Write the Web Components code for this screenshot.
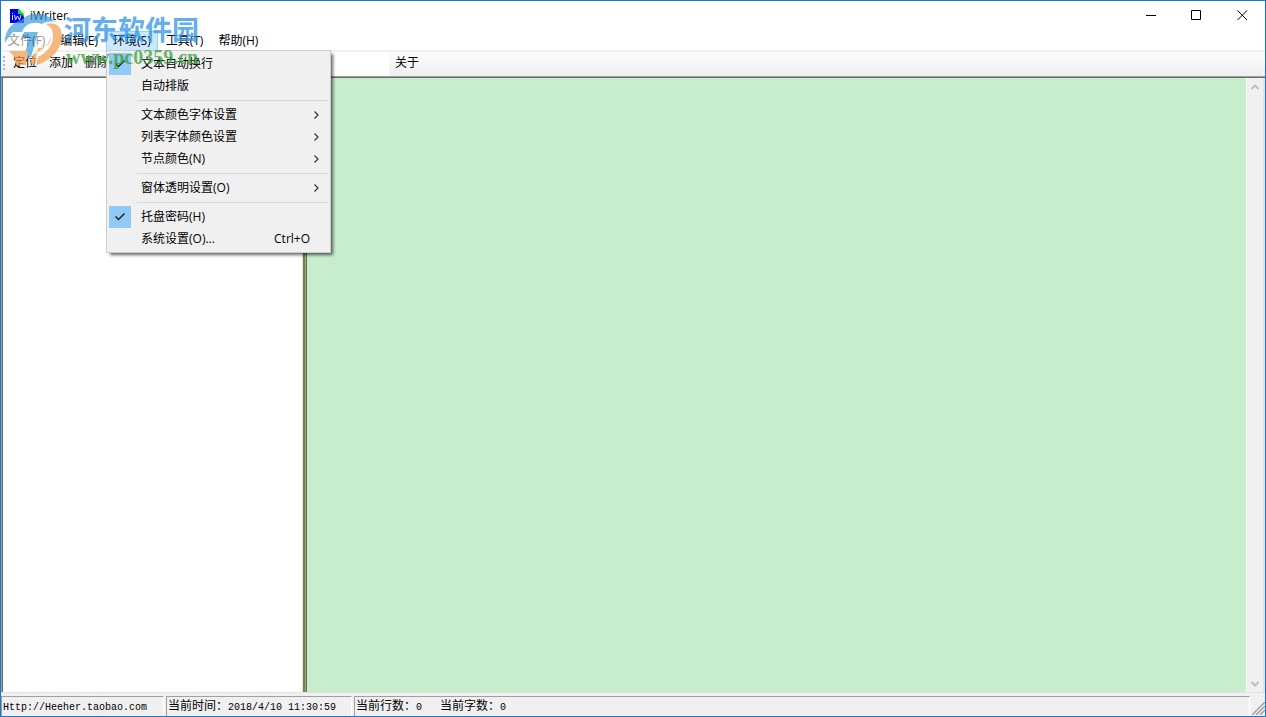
<!DOCTYPE html>
<html lang="zh-CN">
<head>
<meta charset="utf-8">
<title>iWriter</title>
<style>
html,body{height:100%;margin:0}
body{font:12px/22px "Open Sans","Noto Sans CJK SC",sans-serif;color:#000;background:#fff;overflow:hidden}
</style>
</head>
<body>
<iw-window></iw-window>
<script>
const define=(name,html)=>customElements.define(name,class extends HTMLElement{
  constructor(){super();this.attachShadow({mode:'open'}).innerHTML=html;}
});

define('iw-titlebar',`<style>
:host{display:flex;height:30px;align-items:flex-start;padding-left:8px;box-sizing:border-box}
.logo{width:16px;height:16px;margin:7px 5px 0 0}
h1{font:inherit;line-height:30px;margin:0;flex:1}
button{width:46px;height:29px;border:0;padding:0;background:none;display:grid;place-items:center}
button:first-of-type{width:45px}
</style>
<svg class="logo" viewBox="0 0 16 16"><path d="M1 1h8v5h6v9H1z" fill="#0000f0"/><path d="M9 0l6 6v3l-3-3H9z" fill="#10e020"/><path d="M3.500 5v1M3.500 7v5M5.500 7l1 5 2-4 2 4 1.500-5" stroke="#dce4ff" fill="none"/></svg>
<h1>iWriter</h1>
<button aria-label="最小化"><svg width="11" height="11"><path d="M1 5.500h10" stroke="#000"/></svg></button>
<button aria-label="最大化"><svg width="11" height="11"><path d="M.5.5h9v9h-9z" fill="none" stroke="#000"/></svg></button>
<button aria-label="关闭"><svg width="11" height="11"><path d="M.5.5l9.500 9.500M10 .5L.5 10" fill="none" stroke="#000"/></svg></button>`);

define('iw-menu-button',`<style>
:host{display:block}
button{font:inherit;height:20px;line-height:18px;border:1px solid transparent;background:none;padding:0 6px;color:inherit;display:block;white-space:nowrap}
:host([open]) button{background:#cce8ff;border-color:#99d1ff}
</style><button><slot></slot></button>`);

define('iw-menu-item',`<style>
:host{display:block}
button{font:inherit;width:100%;height:22px;border:0;padding:0 17px 0 0;background:none;color:inherit;display:flex;align-items:center;text-align:left}
i{width:22px;height:22px;margin:0 10px 0 2px;display:grid;place-items:center}
:host([checked]) i{background:#91c9f7}
i svg,.arrow{display:none}
:host([checked]) i svg{display:block}
.label{flex:1;white-space:nowrap}
.arrow{width:5px;height:8px;margin-right:-6px}
:host([sub]) .arrow{display:block}
</style>
<button role="menuitem"><i><svg width="12" height="10"><path d="M1.500 4.500L4.500 7.500 10.500 1.500" fill="none" stroke="#222" stroke-width="1.500"/></svg></i><span class="label"><slot></slot></span><slot name="key"></slot><svg class="arrow" viewBox="0 0 5 8"><path d="M.5.5L4 4 .5 7.500" fill="none" stroke="#333" stroke-width="1.200"/></svg></button>`);

define('iw-menu',`<style>
:host{display:block;box-sizing:border-box;width:225px;padding:2px 0;background:#f0f0f0;border:1px solid #ccc;box-shadow:3px 3px 3px -1px rgba(0,0,0,.6)}
hr{height:1px;border:0;background:#d7d7d7;margin:3px 2px 3px 30px}
[slot=key]{margin-right:3px}
</style>
<iw-menu-item checked>文本自动换行</iw-menu-item><iw-menu-item>自动排版</iw-menu-item><hr>
<iw-menu-item sub>文本颜色字体设置</iw-menu-item><iw-menu-item sub>列表字体颜色设置</iw-menu-item><iw-menu-item sub>节点颜色(N)</iw-menu-item><hr>
<iw-menu-item sub>窗体透明设置(O)</iw-menu-item><hr>
<iw-menu-item checked>托盘密码(H)</iw-menu-item><iw-menu-item>系统设置(O)...<span slot="key">Ctrl+O</span></iw-menu-item>`);

define('iw-menubar',`<style>
:host{display:flex;gap:1px;height:19px;background:#fff}
.holder{position:relative}
iw-menu{position:absolute;left:0;top:19px;z-index:5}
</style>
<iw-menu-button>文件(F)</iw-menu-button><iw-menu-button>编辑(E)</iw-menu-button><div class="holder"><iw-menu-button open>环境(S)</iw-menu-button><iw-menu></iw-menu></div><iw-menu-button>工具(T)</iw-menu-button><iw-menu-button>帮助(H)</iw-menu-button>`);

define('iw-toolbar',`<style>
:host{display:flex;height:24px;border-top:2px solid #f0f0f0;border-bottom:1px solid #a0a0a0;background:linear-gradient(#fcfcfc,#efefef)}
.grip{width:2px;height:14px;margin:4px 2px 0;background:repeating-linear-gradient(#b8b8b8 0 2px,transparent 2px 4px)}
button{font:inherit;border:0;background:none;color:inherit;width:36px;padding:0;height:22px;white-space:nowrap}
input{border:0;padding:0;margin:0;width:274px;height:24px;background:#fff;outline:0}
</style>
<span class="grip"></span><button>定位</button><button>添加</button><button>删除</button><input aria-label="查找"><button>关于</button>`);

define('iw-editor',`<style>
:host{display:grid;grid-template-columns:302px 2px minmax(0,1fr);min-height:0;border-top:1px solid #696969;border-bottom:1px solid #e3e3e3}
.tree{background:#fff;border-left:1px solid #a0a0a0;border-right:1px solid #e3e3e3;box-shadow:inset 1px 0 #696969}
.split{background:#6b8e23}
.text{display:flex;background:#c7edcc;min-width:0;border-left:1px solid #a0a0a0;box-shadow:inset 1px 0 #696969}
textarea{flex:1;min-width:0;border:0;padding:0;resize:none;background:transparent;outline:0}
.scroll{width:19px;box-sizing:border-box;border-left:1px solid #fff;border-right:2px solid #e3e3e3;background:#f0f0f0;display:flex;flex-direction:column;justify-content:space-between;align-items:center;padding:6px 0 5px}
svg{width:8px;height:6px;display:block}
</style>
<nav class="tree" aria-label="目录"></nav><div class="split"></div>
<div class="text"><textarea aria-label="正文"></textarea><div class="scroll"><svg viewBox="0 0 8 6"><path d="M.5 5L4 1.500 7.500 5" fill="none" stroke="#bfbfbf" stroke-width="2"/></svg><svg viewBox="0 0 8 6"><path d="M.5 1L4 4.500 7.500 1" fill="none" stroke="#bfbfbf" stroke-width="2"/></svg></div></div>`);

define('iw-statusbar',`<style>
:host{display:flex;gap:2px;height:20px;padding-top:3px;background:#f0f0f0;font:12px/20px "Liberation Mono","Noto Sans CJK SC",monospace}
span{box-sizing:border-box;border-top:1px solid #a0a0a0;border-left:1px solid #a0a0a0;border-right:1px solid #fff;white-space:pre;overflow:hidden}
.url{width:163px;padding-left:1px}.time{width:186px;padding-left:1px}.count{flex:1;padding-left:1px}
b{font:10px/20px "Liberation Mono",monospace}
svg{width:13px;height:13px;align-self:end;margin-bottom:1px}
</style>
<span class="url"><b>Http://Heeher.taobao.com</b></span><span class="time">当前时间：<b>2018/4/10 11:30:59</b></span><span class="count">当前行数：<b>0   </b>当前字数：<b>0</b></span>
<svg viewBox="0 0 13 13"><path d="M0 13L13 0M4 13l9-9M8 13l5-5" stroke="#a0a0a0" stroke-width="1.500"/></svg>`);

define('iw-watermark',`<style>
:host{display:block;pointer-events:none;width:210px;height:72px}
.logo{position:absolute;left:0;top:0;width:70px;height:72px}
.name,.site{position:absolute;white-space:nowrap}
.name{left:64px;top:10px;font:bold 27px/38px "Noto Sans CJK SC",sans-serif;color:#2f93e6;opacity:.75}
.site{left:66px;top:47px;font:bold 20px/20px "Liberation Serif",serif;color:#38a038;opacity:.75}
</style>
<svg class="logo" viewBox="0 0 70 72"><g opacity=".7"><path d="M9 35h39v15H9z" fill="#fff" opacity=".8"/><path d="M5 43C4 30 14 19 29 19c11-3 20-2 27 3-6-1-11 0-14 2-9-3-17 0-20 8H13c-3 3-6 7-8 11z" fill="#3d9bdc"/><path d="M24 32h14l-7 25h-7l5-19h-7z" fill="#3d9bdc"/><path d="M20 23C23 14 40 9 54 20c-9-3-20-3-28 2z" fill="#3d9bdc"/><path d="M46 24c9-3 16 2 16 12 0 13-11 25-26 29l2-8c9-4 15-12 15-21 0-6-2-9-7-12zM9 51h19l-2 14H16c0-6-3-10-7-14z" fill="#f39b48"/><path d="M38 48c8 0 13-4 13-11-3 8-7 13-18 17l-3 10h5z" fill="#f39b48"/></g></svg>
<span class="name">河东软件园</span><span class="site">www.pc0359.cn</span>`);

define('iw-window',`<style>
:host{display:grid;grid-template-rows:auto auto auto minmax(0,1fr) auto;box-sizing:border-box;height:100vh;border:1px solid #1979ca;position:relative;background:#fff}
iw-watermark{position:absolute;left:-1px;top:-1px;z-index:9}
iw-menubar{z-index:4}
</style>
<iw-titlebar></iw-titlebar><iw-menubar></iw-menubar><iw-toolbar></iw-toolbar><iw-editor></iw-editor><iw-statusbar></iw-statusbar><iw-watermark></iw-watermark>`);
</script>
</body>
</html>
